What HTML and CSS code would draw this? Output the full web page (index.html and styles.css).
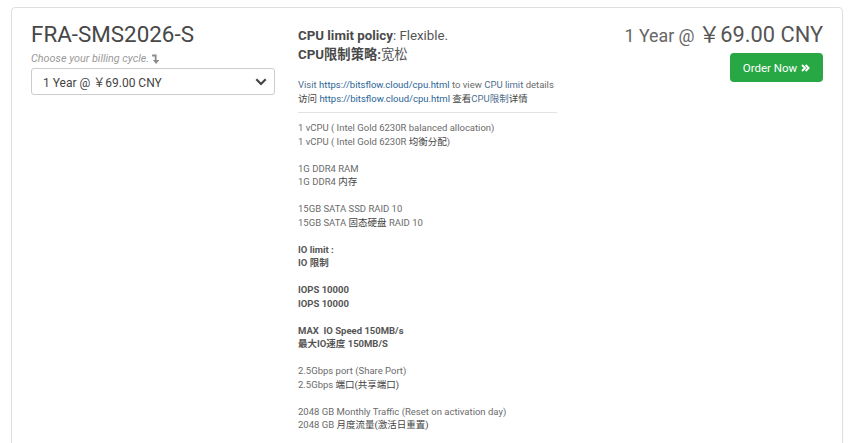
FILE: index.html
```html
<!DOCTYPE html>
<html>
<head>
<meta charset="utf-8">
<link rel="stylesheet" href="styles.css">
</head>
<body>
<div class="card">
  <div class="col-left">
    <h1 class="title">FRA-SMS2026-S</h1>
    <div class="hint">Choose your billing cycle.
      <svg class="hook" width="8" height="10" viewBox="0 0 7 9"><path d="M0 0.5 H4 V5.5 H6.5 L3.6 9 L0.7 5.5 H2.4 V2.3 H0 Z" fill="#8a8a8a"/></svg>
    </div>
    <div class="select">
      <span>1 Year @ ￥69.00 CNY</span>
      <svg class="chev" width="12" height="8" viewBox="0 0 12 8"><path d="M1.3 1.3 L6 6 L10.7 1.3" fill="none" stroke="#444" stroke-width="2.2"/></svg>
    </div>
  </div>
  <div class="col-mid">
    <div class="policy">
      <div><b>CPU limit policy</b>: Flexible.</div>
      <div><b>CPU限制策略:</b>宽松</div>
    </div>
    <div class="desc">
      <div class="links">
        <div><span class="soft">Visit</span> <span class="link">https://bitsflow.cloud/cpu.html</span> to view <span class="soft">CPU limit</span> details</div>
        <div><span class="dark">访问</span> <span class="link">https://bitsflow.cloud/cpu.html</span> <span class="dark">查看</span><span class="soft">CPU限制</span><span class="dark">详情</span></div>
      </div>
      <hr class="rule">
      <div class="group"><div>1 vCPU ( Intel Gold 6230R balanced allocation)</div><div>1 vCPU ( Intel Gold 6230R <span class="dark">均衡分配</span>)</div></div>
      <div class="group"><div>1G DDR4 RAM</div><div>1G DDR4 <span class="dark">内存</span></div></div>
      <div class="group"><div>15GB SATA SSD RAID 10</div><div>15GB SATA <span class="dark">固态硬盘</span> RAID 10</div></div>
      <div class="group strong"><div>IO limit :</div><div>IO 限制</div></div>
      <div class="group strong"><div>IOPS 10000</div><div>IOPS 10000</div></div>
      <div class="group strong"><div>MAX&nbsp; IO Speed 150MB/s</div><div>最大IO速度 150MB/S</div></div>
      <div class="group"><div>2.5Gbps port (Share Port)</div><div>2.5Gbps <span class="dark">端口(共享端口)</span></div></div>
      <div class="group"><div>2048 GB Monthly Traffic (Reset on activation day)</div><div>2048 GB <span class="dark">月度流量(激活日重置)</span></div></div>
    </div>
  </div>
  <div class="col-right">
    <div class="price"><span class="cycle">1 Year @</span> <span class="amount">￥69.00 CNY</span></div>
    <a class="order">Order Now
      <svg width="9" height="8" viewBox="0 0 9 8"><path d="M1 1 L4 4 L1 7 M4.6 1 L7.6 4 L4.6 7" fill="none" stroke="#fff" stroke-width="1.9"/></svg>
    </a>
  </div>
</div>
</body>
</html>
```
FILE: styles.css
```css
html, body {
  margin: 0;
  padding: 0;
  background: #fff;
}
body {
  padding: 7px 11px 0 11px;
  font-family: Roboto, "Noto Sans CJK SC", sans-serif;
  color: #666;
}
.card {
  border: 1px solid #dedede;
  border-radius: 4px;
  padding: 14px 19px 30px 19px;
  display: grid;
  grid-template-columns: 244px 259px 1fr;
  column-gap: 23px;
  min-height: 460px;
}
.title {
  margin: 0;
  font-size: 22.4px;
  line-height: 25px;
  font-weight: 400;
  color: #474747;
}
.hint {
  margin-top: 5px;
  font-size: 10.8px;
  line-height: 14px;
  font-style: italic;
  color: #9a9a9a;
  display: flex;
  align-items: center;
  gap: 3px;
}
.hook { display: block; }
.select {
  margin-top: 2px;
  height: 25px;
  border: 1px solid #ccc;
  border-radius: 3px;
  display: flex;
  align-items: center;
  justify-content: space-between;
  padding: 0 7px 0 11px;
  font-size: 12px;
  color: #444;
}
.chev { display: block; }
.policy {
  margin-top: 4px;
  font-size: 13.3px;
  line-height: 19px;
  color: #555;
}
.policy b { font-weight: 700; color: #4a4a4a; }
.desc {
  margin-top: 14px;
  font-size: 9.5px;
  line-height: 13.5px;
  color: #6b6b6b;
}
.link { color: #2a6496; }
.soft { color: #4f6f8f; }
.dark { color: #444; }
.rule {
  margin: 7px 0 8px 0;
  border: 0;
  border-top: 1px solid #e2e2e2;
}
.group { margin-bottom: 13.5px; }
.strong { font-weight: 700; color: #555; }
.col-right {
  display: flex;
  flex-direction: column;
  align-items: flex-end;
}
.price {
  line-height: 25px;
  color: #5a5a5a;
  white-space: nowrap;
}
.cycle { font-size: 17.8px; color: #666; }
.amount { font-size: 21.8px; color: #555; }
.order {
  margin-top: 4px;
  width: 93px;
  height: 29px;
  box-sizing: border-box;
  background: #28a745;
  border-radius: 4px;
  color: #fff;
  font-size: 11.5px;
  display: flex;
  align-items: center;
  justify-content: center;
  gap: 4px;
}
.order svg { display: block; }
```
